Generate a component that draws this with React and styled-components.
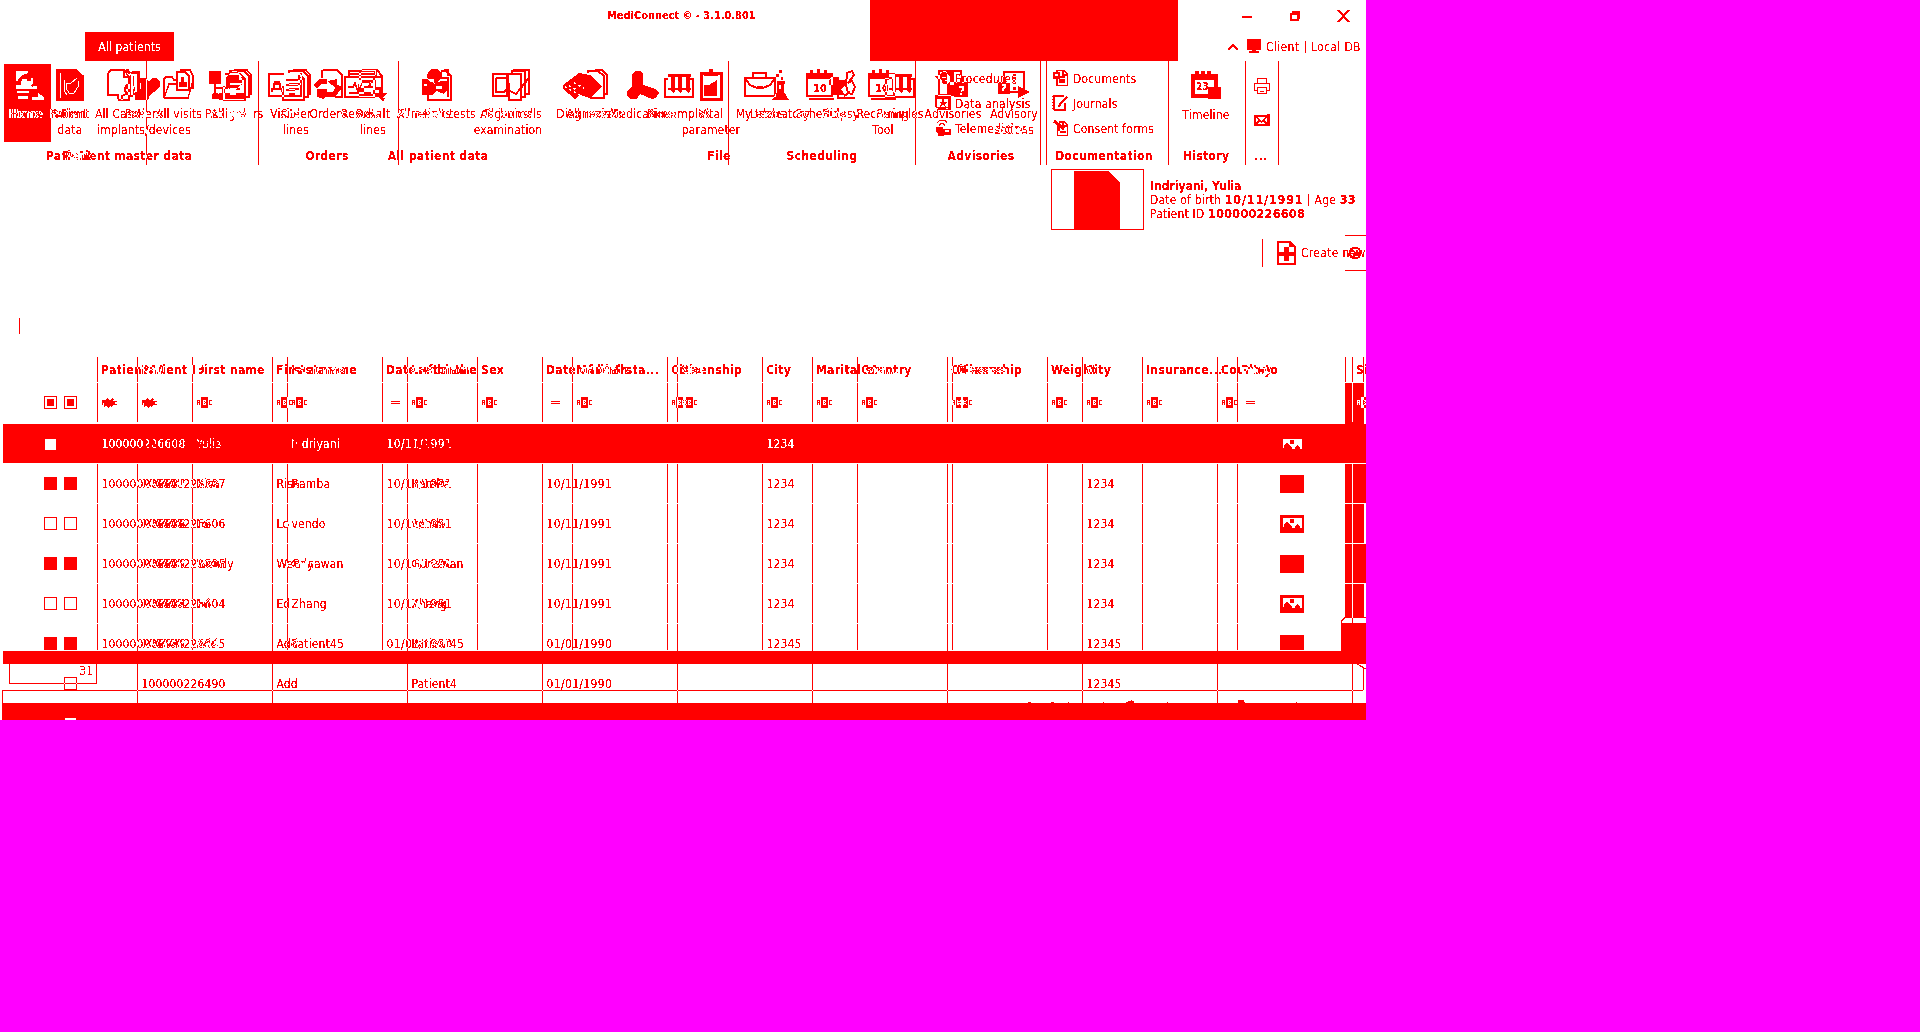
import React from 'react';
import styled, { createGlobalStyle, css } from 'styled-components';

const RED = '#ff0000';
const CYAN = '#00ffff';

const Global = createGlobalStyle`
  html, body { margin: 0; background: #ff00ff; overflow: hidden; }
  #root { height: 1032px; }
`;

const Frame = styled.main`
  width: 1366px;
  height: 720px;
  background: #fff;
  display: grid;
  grid-template: 720px / 1366px;
  overflow: hidden;
  isolation: isolate;
  font: 12px/16px 'DejaVu Sans Condensed', 'DejaVu Sans', sans-serif;
  font-stretch: condensed;
  white-space: pre;
  svg { display: block; flex: none; overflow: visible; shape-rendering: crispEdges; }
`;

const Layer = styled.div`
  --knockout: ${p => (p.$diff ? '#000' : '#fff')};
  grid-area: 1 / 1;
  min-width: 0;
  display: flex;
  flex-direction: column;
  overflow: hidden;
  color: ${p => (p.$diff ? CYAN : RED)};
  filter: url(#crisp);
  ${p => p.$diff && css`mix-blend-mode: difference;`}
`;

const Strip = styled.div`
  display: flex;
  flex: none;
  height: ${p => p.$h}px;
  padding-left: ${p => p.$left || 0}px;
  align-items: ${p => p.$align || 'center'};
`;
const Title = styled.b`
  width: 635px;
  font-size: 11px;
  letter-spacing: -0.03px;
`;
const WindowButtons = styled.div`
  display: flex;
  align-items: center;
  gap: 38px;
`;
const Tab = styled.div`
  background: ${RED};
  color: #fff;
  width: 89px;
  height: 29px;
  line-height: 30px;
  text-align: center;
  letter-spacing: 0.15px;
  margin-right: 1054px;
`;
const Connection = styled.div`
  display: flex;
  align-items: center;
  height: 29px;
  span { margin-left: 5px; line-height: 30px; letter-spacing: 0.35px; }
  svg + svg { margin-left: 9px; }
`;
const Banner = styled.div`
  position: absolute;
  left: 870px;
  top: 0;
  width: 308px;
  height: 61px;
  background: ${RED};
`;

const Ribbon = styled.div`
  display: grid;
  grid-template: 104px / 1366px;
  height: 104px;
  flex: none;
`;
const Lane = styled.div`
  grid-area: 1 / 1;
  display: flex;
  align-items: flex-start;
  padding-top: ${p => p.$top || 0}px;
`;
const Line = styled.i`
  width: 1px;
  height: ${p => p.$h || 104}px;
  flex: none;
  margin-left: ${p => p.$gap || 0}px;
  background: currentColor;
`;
const Slot = styled.div`
  width: 0;
  flex: none;
  margin-left: ${p => p.$gap}px;
  display: flex;
  flex-direction: column;
  align-items: center;
  text-align: center;
  font-weight: ${p => (p.$bold ? 'bold' : 'normal')};
  letter-spacing: ${p => (p.$bold ? '0.35px' : '0.15px')};
  svg + span { margin-top: 5px; }
`;
const HomeTile = styled.div`
  grid-area: 1 / 1;
  width: 47px;
  height: 78px;
  box-sizing: border-box;
  margin: 3px 0 0 4px;
  padding-top: 5px;
  background: ${RED};
  color: #fff;
  display: flex;
  flex-direction: column;
  align-items: center;
  svg + span { margin: 5px 6px 0 0; }
`;
const SmallList = styled.div`
  margin-left: ${p => p.$gap}px;
  width: ${p => p.$w}px;
  display: flex;
  flex-direction: column;
  gap: 9px;
`;
const SmallItem = styled.div`
  display: flex;
  gap: 4px;
  height: 16px;
  letter-spacing: 0.2px;
  span { line-height: 18px; }
`;
const SideTools = styled.div`
  display: flex;
  flex-direction: column;
  gap: 20px;
  padding-top: 8px;
`;

const Photo = styled.div`
  box-sizing: border-box;
  width: 93px;
  height: 61px;
  margin-top: 4px;
  padding-right: 1px;
  border: 1px solid;
  display: flex;
  justify-content: center;
  align-items: flex-end;
`;
const PatientInfo = styled.div`
  margin: 14px 0 0 6px;
  line-height: 14px;
  letter-spacing: 0.2px;
`;
const Name = styled.b`
  font-size: 12px;
  letter-spacing: 0;
`;
const Figure = styled.b`
  font-size: 12.5px;
  letter-spacing: ${p => p.$track || 0.25}px;
`;
const Create = styled.span`
  margin-left: 5px;
  line-height: 18px;
  width: 64px;
  flex: none;
  letter-spacing: 0.3px;
`;
const Expander = styled.div`
  box-sizing: border-box;
  flex: none;
  width: 21px;
  height: 36px;
  margin-left: -20px;
  padding: 10px 3px;
  border: solid;
  border-width: 1px 0;
`;

const Row = styled.div`
  display: flex;
  flex: none;
  height: ${p => p.$h || 39}px;
  margin-bottom: ${p => (p.$mb === undefined ? 1 : p.$mb)}px;
  ${p => p.$selected && css`
    margin-left: 3px;
    background: ${RED};
    color: #fff;
    width: 1363px;
    position: relative;
  `}
`;
const Lead = styled.div`
  box-sizing: border-box;
  width: ${p => p.$w}px;
  flex: none;
  padding: 13px 0 0 ${p => p.$pad}px;
`;
const Cell = styled.div`
  box-sizing: border-box;
  flex: none;
  width: ${p => p.$w}px;
  border-left: 1px solid ${p => (p.$plain ? 'transparent' : 'currentColor')};
  padding-left: ${p => (p.$bold ? 3 : 3.5)}px;
  display: flex;
  align-items: center;
  font-weight: ${p => (p.$bold ? 'bold' : 'normal')};
  letter-spacing: ${p => (p.$bold ? '0.35px' : p.$date ? '0.35px' : '0.13px')};
  min-width: 0;
`;
const Ghost = styled.div`
  position: absolute;
  left: 134px;
  top: 0;
  height: 39px;
  display: flex;
  color: ${RED};
`;
const Check = styled.div`
  box-sizing: border-box;
  width: ${p => (p.$kind === 'white' ? 11 : 13)}px;
  height: ${p => (p.$kind === 'white' ? 11 : 13)}px;
  margin: ${p => (p.$kind === 'white' ? '2px 0 0 1px' : 0)};
  border: 1px solid;
  ${p => (p.$kind === 'full' || p.$kind === 'white') && css`background: currentColor;`}
  ${p => p.$kind === 'mixed' && css`padding: 2px; background: currentColor content-box;`}
`;
const Picture = styled.div`
  width: 24px;
  height: 18px;
  margin-left: 38px;
  background: ${RED};
`;
const TableClip = styled.div`
  height: ${p => p.$h}px;
  flex: none;
  overflow: hidden;
  display: flex;
  flex-direction: column;
`;
const Bar = styled.div`
  flex: none;
  height: ${p => p.$h}px;
  margin: ${p => p.$m || 0};
  background: ${RED};
`;
const CountBox = styled.div`
  box-sizing: border-box;
  width: 88px;
  height: 20px;
  margin-left: 9px;
  padding-right: 3px;
  border: 1px solid;
  border-top: 0;
  text-align: right;
  line-height: 14px;
`;
const StatusEdge = styled.div`
  box-sizing: border-box;
  height: 13px;
  margin: 6px 3px 0 2px;
  border: 1px solid;
  border-width: 1px 0 0 1px;
`;
const ScrollTrack = styled.div`
  position: absolute;
  left: 1345px;
  top: 383px;
  display: flex;
  flex-direction: column;
  gap: 1px;
`;
const TrackPiece = styled.i`
  width: ${p => p.$w}px;
  height: ${p => p.$h}px;
  background: ${RED};
`;
const Corner = styled.div`
  position: absolute;
  left: 1341px;
  top: 617px;
`;
const CornerCover = styled.div`
  position: absolute;
  left: 1341px;
  top: 623px;
  width: 25px;
  height: 41px;
  background: ${RED};
`;
const Specks = styled.div`
  position: absolute;
  left: 1028px;
  top: 699px;
`;

const I = ({ w = 32, h = 32, children }) => (
  <svg width={w} height={h} viewBox={`0 0 ${w} ${h}`} fill="none" stroke="currentColor" strokeWidth="1.5">{children}</svg>
);
const F = { fill: 'currentColor', stroke: 'none' };
const K = 'var(--knockout)';

const icons = {
  home: <I><path {...F} d="M4 2H16V4L10 6L6 10V12H4zM10 10h5v2h4V9h2v6l-4 3H8zM4 16h5v2h12v2H4zM5 22h12v2H5zM6 27h10v3H6zM17 17h3v2h-3zM21 17h4v3h-4zM26 24l6 4v3H20v-3h6z" /></I>,
  patient: <I w={28}><path fill="currentColor" d="M1 1H20L27 7V31H1z" /><path stroke={K} strokeWidth="1" d="M4.500 4V29M8.500 11V22L11 26M22.500 12V17L18 24H13L10 19V14L15 14L21 9" /></I>,
  docs: <I w={28}><path strokeWidth="2" d="M2 4L5 1H18V8H23V31H12M2 4V26H12V30" /><path d="M18 1L23 8M18 1L26 6V26M20 1H22L27 8V20" /></I>,
  person: <I><path d="M2 31V27L8 24H13L17 27V31M5 18V22L8 25H11L14 21V18" strokeWidth="2" /><path {...F} d="M4 20L6 15H12L15 19L10 20zM16 24l3-4h7l3 5-3 5h-7z" /></I>,
  heart: <I><path {...F} d="M12 9h5l4 3 3-3h5l3 4v5l-6 5-5 4v3h-8V18z" /><path strokeWidth="3" d="M3 28V5L6 3H10V22M8 23V29H20" /></I>,
  folder: <I><path d="M1 29V10L3 8H9L11 11H14M1 29H25L30 12M1 29L6 15H13M14 3V21H26V7L22 3zM17 3L18 1H27L30 7V20" /><path {...F} d="M16 18V13H18V8H21V13H24V18z" /></I>,
  pedigree: <I w={40}><path {...F} d="M0 2h12v13H0zM17 9l6-7h5l5 6v6l-6 7h-6l-4-5zM3 25l3-2 4 2v5H3zM10 24h25v7H10z" /><path d="M6 15V24M7 19H18V9M14 19V29" /></I>,
  stack: <I w={30}><path strokeWidth="2" d="M3 5H18L23 10V31H2V17M18 5V10H23" /><path d="M8 5V2H22L27 7V28H24M13 2V1H25L29 6V25H27M8 15H20M8 20H18M8 25H14" /></I>,
  card: <I w={34}><path d="M1 5H33V27H1zM18 11H30M18 16H30M18 21H27" strokeWidth="2" /><path d="M6 19V15H12V19M4 23V20H14V23" strokeWidth="2" /><path {...F} d="M6 12h6v3H6z" /></I>,
  refresh: <I><path strokeWidth="5" d="M3 18L9 12H15M28 17L22 25H14L10 28" /><path {...F} d="M15 12L25 10V20zM5 20H15V22L12 30L5 28z" /><path d="M11 1H25L30 6V28H23M10 1V9" strokeWidth="2" /></I>,
  ecg: <I w={34}><path d="M1 8H30V28H1zM4 5H31V2H5V7M4 18H9L11 14L14 23L16 11L18 18H24L26 15V18H30M5 24H27" strokeWidth="1.5" /></I>,
  swap: <I w={28}><path strokeWidth="2" d="M3 1H18L23 7V27H1V3M17 1V8H23" /><path strokeWidth="3" d="M3 12H15V19H21V25M3 17V26H19L25 31" /><path {...F} d="M15 24h13l-6 7z" /></I>,
  search: <I w={30}><path {...F} fillRule="evenodd" d="M6 3l3-3h6l4 4v5l-5 5-6-1-3-5zM0 10h12v5l7-3h7v8l-4 5-7-3-5 4H0zM14 17v3h6v-3zM2 15h3v2H2z" /><path d="M6 23V31H29V7L24 2H19M19 3V9H26V28M22 1H26V7" strokeWidth="1.5" /></I>,
  technical: <I w={38}><path d="M1 5H15V27H1zM4 9H14M4 9V23H12L17 17M17 14V31H29V5H16V14M20 4V2H33V28H30M22 2V1H37V25H34M18 22L24 25L37 9" strokeWidth="2" /></I>,
  diagnosis: <I w={46}><path {...F} d="M1 16L17 4L28 6L40 18L28 29L18 26L13 30L1 20z" /><path stroke={K} strokeDasharray="2 3" d="M7 17L15 21M12 14L22 19M3 18L18 26" /><path d="M26 4V2H36L42 7V29H28M33 1H40L45 6V25H42" strokeWidth="2" /></I>,
  pill: <I><path {...F} d="M5 5l3-3h5l3 3v11l13 4 3 4-3 5-4 1-12-5-3 5H3l-3-3v-4l5-6z" /></I>,
  tubes: <I w={30}><path {...F} d="M4 5h8v3h-1v14l-2 2-2-2V8H4zM12 5h8v3h-2v14l-2 2-2-2V8h-2zM20 5h7v3h-1v14l-2 2-2-2V8h-2z" /><path d="M4 10H1V28H29V10H26M4 20H27" /></I>,
  clipboard: <I w={24}><path strokeWidth="3" d="M2 4H22V30H2z" /><path {...F} d="M5 3h5V0h4v3h5v4H5zM5 16h5l8-5v16H5z" /></I>,
  briefcase: <I><path strokeWidth="2" d="M1 9H31V27H1zM9 9V4H22V9M1 9L6 16L13 19H19L26 16L31 9" /><path {...F} d="M13 17h6v3h-6z" /></I>,
  flask: <I w={17}><path {...F} d="M5 12h8v3h-1v8l5 8H0l5-8v-8zM7 1h3v3H7zM4 5h3v3H4zM9 8h2v3H9z" /><path stroke={K} d="M8 16V20" /></I>,
  calendar: <I><path strokeWidth="2" d="M2 6H27V27H2zM4 30H29" /><path {...F} d="M1 4h4V1h3v3h4V0h3v4h4V1h3v3h6v6H1z" /><text x="8" y="23" fontSize="11" fontWeight="bold" {...F}>10</text></I>,
  scope: <I w={28}><path {...F} d="M4 8h8v3h7v5l-5 4 4 6H6V16H2v-4z" /><path strokeWidth="2" d="M11 19V29H28M20 4L25 2L27 6L21 14L25 12L28 18L25 25L21 24L19 16zM17 27L23 23" /></I>,
  advisory: <I w={30}><path strokeWidth="2" d="M1 2H23V26H1z" /><path strokeWidth="1" d="M9.500 3V25" /><path {...F} d="M10 3h6v10h-4v3h4v9h-6zM16 13h14v15H16z" /><path stroke={K} strokeWidth="2" d="M21 18H25V21L23 22M23 24V26" /></I>,
  advisoryAction: <I><path d="M6 3H26V23H6z" /><path {...F} d="M0 13h12v12H0zM15 5h3v10h-3zM15 18h3v3h-3zM20 17l12 6-12 6z" /><path stroke="#fff" strokeWidth="2" d="M4 16H7V18L5 20V22" /></I>,
  timeline: <I><path strokeWidth="4" d="M3 6H26V26H3z" /><path {...F} d="M1 4h4V1h4v3h2V1h4v3h2V1h4v3h6v6H1zM18 17h13v12H18z" /><text x="6" y="20" fontSize="10" fontWeight="bold" {...F}>23</text></I>,
  proc: <I w={16} h={16}><path {...F} d="M0 6l5-1 2-3h3l5 5v4l-3 3H8L6 9H3L1 8zM8 1h3v1H8z" /><path stroke={K} strokeWidth="1" d="M7 7.500h4M10 10.500h2" /></I>,
  analysis: <I w={16} h={16}><path {...F} fillRule="evenodd" d="M0 0h16v15H3L0 12zM2 4v8h11V4z" /><path {...F} d="M7 4h2v3h3l-2 2 1 3-3-2-3 2 1-3-2-2h3z" /></I>,
  tele: <I w={16} h={16}><path strokeWidth="1" d="M2 2.500L5 .5H10L12 2.500M4 5.500L6 3.500H8L10 5.500" /><path {...F} fillRule="evenodd" d="M1 7h7v2h8v6H9v1H3v-2L1 12zM10 10v2h4v-2z" /></I>,
  docSmall: <I w={16} h={16}><path {...F} d="M0 2h7v7H0z" /><path d="M4 9V15.500H14.500V4L11 .5H4V3M10 1V5H14M7 7H12M6 10H12M6 12H12" /><path stroke="#fff" d="M2 5h3" /></I>,
  journal: <I w={16} h={16}><path d="M1 15V1H11M12 8V15H1" /><path strokeDasharray="1 2" d="M0 1V15" /><path strokeWidth="2" d="M14 2L7 9L6 12" /></I>,
  consent: <I w={16} h={16}><path d="M4.500 8V15.500H14.500V5L11 2H6M10 2V6H14M7 12H13" /><path strokeWidth="3" d="M1 1L11 9M5 6V11" /></I>,
  print: <I w={16} h={16}><path strokeWidth="1" d="M3.500 6V.5H12.500V6M3 12.500H.5V5.500H15.500V12.500H13M3.500 9.500H12.500V15.500H3.500zM6 13.500H10" /></I>,
  mail: <I w={17} h={12}><path strokeWidth="2" d="M1 2H14V11H1z" /><path strokeWidth="1.5" d="M2 3L7.500 8L13 3M2 10L6 6M13 10L9 6" /><path {...F} d="M13 0h3v12h-3z" /></I>,
};

const Abc = ({ first }) => (
  <svg width="16" height="13" viewBox="0 0 16 13" fill="currentColor">
    {first
      ? <path d="M0 4h3v1l2-3 2 2 3-1v-1l2 1-1 2h4v1h-2v2h2v1h-4l-1 2-2-1-2 2-2-2-2 1V7H1v2H0z" />
      : <><path fillRule="evenodd" d="M0 4h3v5H2V7H1v2H0zM1 5v1h1V5z" /><path d="M12 4h3v1h-2v3h2v1h-3z" /><path fillRule="evenodd" d="M4 1h7v11H4zM6 4v5h3V7H8V6h1V4zM7 5h1v1H7zM7 7h1v1H7z" /></>}
  </svg>
);
const Equals = () => (
  <svg width="14" height="6" viewBox="0 0 14 6" fill="currentColor"><path d="M4 1h9v1H4zM4 3h9v1H4z" /></svg>
);

const Slots = ({ items, top, bold }) => (
  <Lane $top={top}>
    {items.map(([c, icon, text], i) => (
      <Slot key={i} $bold={bold} $gap={c - (i ? items[i - 1][0] : 0)}>
        {icon && icons[icon]}
        <span>{text}</span>
      </Slot>
    ))}
  </Lane>
);

const ribbonA = [
  [70, 'patient', 'Patient\ndata'], [120, 'docs', 'All Cases'], [179, 'folder', 'All visits'],
  [237, 'stack', 'All orders'], [296, 'stack', 'Order\nlines'], [328, 'refresh', 'Orders'],
  [373, 'swap', 'Result\nlines'], [437, 'search', 'Function tests'],
  [511, 'technical', 'All journals'], [585, 'diagnosis', 'Diagnoses'], [643, 'pill', 'Medications'],
  [711, 'clipboard', 'Vital\nparameter'], [760, 'briefcase', 'My tasks'], [821, 'calendar', 'Schedule'],
  [883, 'calendar', 'Recurring\nTool'], [953, 'advisory', 'Advisories'], [1014, 'advisoryAction', 'Advisory\nactions'],
];
const ribbonIconsB = [
  [136, 'person', ''], [144, 'heart', ''], [229, 'pedigree', 'Pedigree'], [285, 'card', 'Visits'], [361, 'ecg', 'Results'],
  [679, 'tubes', 'Biosamples'], [780, 'flask', 'Laboratory'], [841, 'scope', 'Biopsy'], [900, 'tubes', 'Samples'],
];
const ribbonLabelsB = [
  [27, null, 'Home'], [68, null, 'Patient'], [144, null, 'Patient\nimplants/devices'],
  [424, null, 'All results'], [508, null, 'Technical\nexamination'], [595, null, 'All revisits'],
];

const aHeads = ['Patient ID', 'First name', 'Last name', 'Date of birth', 'Sex', 'Marital sta...', 'Citizenship', 'City', 'Country', 'Disease', 'Weight', 'Insurance...', 'Photo'];
const bHeads = ['Patient ID', 'First name', 'Last name', 'Date of birth', 'Sex', 'Marital sta...', 'Citizenship', 'City', 'Country', 'Size'];
const people = [
  ['100000226608', 'Yulia', 'Indriyani', '10/11/1991', '1234'],
  ['100000226607', 'Risa', 'Bamba', '10/11/1991', '1234'],
  ['100000226606', 'Lo', 'vendo', '10/11/1991', '1234'],
  ['100000226605', 'Wendy', 'Gunawan', '10/11/1991', '1234'],
  ['100000226604', 'Ed', 'Zhang', '10/11/1991', '1234'],
  ['100000226545', 'Add', 'Patient45', '01/01/1990', '12345'],
  ['100000226490', 'Add', 'Patient4', '01/01/1990', '12345'],
];
const spread = (p, n) => Array.from({ length: n }, (_, i) => (i < 4 ? p[i] : i === 7 ? p[4] : ''));
const landscape = 'M0 0h19v10h-2V8l-3-2-2 2v2H9V8L6 6V5L3 4 1 6v3H0zM7 1v4h4V1z';

const Grid = ({ heads, w, lead, pad, count, diff, last }) => {
  const widthOf = i => (i === heads.length - 1 ? last : w);
  return (
    <>
      <Row $h={25}>
        <Lead $w={lead} />
        {heads.map((h, i) => <Cell key={i} $w={widthOf(i)} $bold>{h}</Cell>)}
        {!diff && <><Line $h={25} /><Line $h={25} $gap={17} /></>}
      </Row>
      <Row $mb={2}>
        <Lead $w={lead} $pad={pad}><Check $kind="mixed" /></Lead>
        {heads.map((h, i) => (
          <Cell key={i} $w={widthOf(i)}>{i === 3 || h === 'Photo' ? <Equals /> : <Abc first={i === 0} />}</Cell>
        ))}
      </Row>
      {people.slice(0, count).map((p, r) => {
        const selected = r === 0;
        if (diff && selected) return <Row key={r} />;
        return (
          <Row key={r} $selected={selected}>
            <Lead $w={selected ? lead - 3 : lead} $pad={selected ? pad - 3 : pad}>
              <Check $kind={selected ? 'white' : r % 2 ? 'full' : 'empty'} />
            </Lead>
            {spread(p, heads.length).map((v, i) => (
              <Cell key={i} $w={widthOf(i)} $plain={selected} $date={i === 3}>
                {heads[i] !== 'Photo' ? v : selected
                  ? <svg width="62" height="10" viewBox="-41 0 62 10" fill="currentColor"><path fillRule="evenodd" d={landscape} /></svg>
                  : <Picture>{r % 2 === 0 && <svg width="24" height="18" viewBox="-3 -3 24 18" fill="#fff"><path fillRule="evenodd" d={landscape} /></svg>}</Picture>}
              </Cell>
            ))}
            {selected && <Ghost>{p.slice(0, 3).map(v => <Cell key={v} $w={135} $plain>{v}</Cell>)}</Ghost>}
          </Row>
        );
      })}
    </>
  );
};

const groupTitles = [
  [69, null, 'Patient'], [327, null, 'Orders'], [438, null, 'All patient data'], [719, null, 'File'],
  [822, null, 'Scheduling'], [981, null, 'Advisories'], [1104, null, 'Documentation'], [1206, null, 'History'], [1261, null, '...'],
];

export default function App() {
  return (
    <>
      <Global />
      <Frame>
        <svg width="0" height="0" style={{ position: 'absolute' }}>
          <filter id="crisp" x="0" y="0" width="100%" height="100%" colorInterpolationFilters="sRGB">
            <feComponentTransfer>
              <feFuncR type="discrete" tableValues="0 1" />
              <feFuncG type="discrete" tableValues="0 0 0 1 1 1 1" />
              <feFuncB type="discrete" tableValues="0 0 0 1 1 1 1" />
              <feFuncA type="discrete" tableValues="0 0 0 1 1 1 1" />
            </feComponentTransfer>
          </filter>
        </svg>

        <Layer>
          <Strip $h={32} $left={607}>
            <Title>MediConnect © - 3.1.0.801</Title>
            <WindowButtons>
              <I w={10} h={12}><path strokeWidth="2" d="M0 7H10" /></I>
              <I w={10} h={10}><path {...F} fillRule="evenodd" d="M0 2h2V0h8v8h-1v2H0zM2 4v4h5V4z" /></I>
              <I w={12} h={12}><path strokeWidth="2" d="M0 0L11 12M11 0L0 12" /></I>
            </WindowButtons>
          </Strip>
          <Strip $h={29} $left={85}>
            <Tab>All patients</Tab>
            <Connection>
              <I w={10} h={6}><path strokeWidth="2.5" d="M0 6L5 1L10 6" /></I>
              <I w={14} h={15}><path {...F} d="M0 0h14v11H9v1h3v2H2v-2h3v-1H0z" /></I>
              <span>Client | Local DB</span>
            </Connection>
          </Strip>
          <Banner />

          <Ribbon>
            <Lane>
              {[146, 111, 139, 329, 186, 124, 5, 121, 76, 32].map((g, i) => <Line key={i} $gap={g} />)}
            </Lane>
            <HomeTile>{icons.home}<span>Home</span></HomeTile>
            <Slots items={ribbonA} top={8} />
            <Slots top={87} bold items={groupTitles} />
            <Lane $top={9}>
              <SmallList $gap={1053} $w={153}>
                <SmallItem>{icons.docSmall}<span>Documents</span></SmallItem>
                <SmallItem>{icons.journal}<span>Journals</span></SmallItem>
                <SmallItem>{icons.consent}<span>Consent forms</span></SmallItem>
              </SmallList>
              <Slot $gap={0}>{icons.timeline}<span>Timeline</span></Slot>
              <SmallList $gap={48} $w={20}>
                <SideTools>{icons.print}{icons.mail}</SideTools>
              </SmallList>
            </Lane>
          </Ribbon>

          <Strip $h={67} $left={1051} $align="flex-start">
            <Photo><I w={46} h={58}><path {...F} d="M0 0H34L46 12V58H0z" /></I></Photo>
            <PatientInfo>
              <Name>Indriyani, Yulia</Name>{'\n'}
              Date of birth <Figure $track={0.8}>10/11/1991</Figure> | Age <Figure>33</Figure>{'\n'}
              Patient ID <Figure>100000226608</Figure>
            </PatientInfo>
          </Strip>
          <Strip $h={42} $left={1262}>
            <Line $h={28} />
            <Strip $h={24} $left={14}>
              <I w={19} h={24}><path strokeWidth="2" d="M1 1H13L18 6V23H1z" /><path {...F} d="M7 6h5v5h6v4h-6v5H7v-5H1v-4h6zM12 1l6 5h-6z" /></I>
            </Strip>
            <Create>Create new</Create>
            <Expander><I w={14} h={14}><circle cx="7" cy="7" r="5.500" strokeWidth="2" /><path strokeWidth="2" d="M4 4L9 8M9 4V9H5" /></I></Expander>
          </Strip>
          <Strip $h={83} $left={19} $align="flex-start">
            <Lane $top={44}><Line $h={16} /></Lane>
          </Strip>

          <TableClip $h={293}>
            <Grid heads={aHeads} w={95} last={108} lead={97} pad={44} count={6} />
          </TableClip>
          <Bar $h={13} $m="1px 0 0 3px" />
          <CountBox>31</CountBox>
          <StatusEdge />
          <Bar $h={17} $m="0 0 0 2px" />
          <ScrollTrack>
            <TrackPiece $w={19} $h={80} />
            {[21, 19, 21, 19].map((w, i) => <TrackPiece key={i} $w={w} $h={i === 3 ? 33 : 39} />)}
          </ScrollTrack>
          <Corner>
            <I w={25} h={74}><path strokeWidth="1" d="M25 .5H4L.5 4V8M16 47L25 52M22.500 51V73" /></I>
          </Corner>
          <Specks>
            <I w={272} h={4}><path {...F} d="M0 3h3v1H0zM23 3h3v1h-3zM40 3h1v1h-1zM75 3h1v1h-1zM98 3h2v-1h3v-1h1v1h2v2h-8zM139 3h1v1h-1zM210 1h6v2h1v1h-7zM268 3h1v1h-1z" /></I>
          </Specks>
        </Layer>

        <Layer $diff>
          <Strip $h={61} />
          <Ribbon>
            <Slots items={ribbonIconsB} top={8} />
            <Slots items={ribbonLabelsB} top={45} />
            <Slots items={[[128, null, 'Patient master data']]} top={87} bold />
            <Lane $top={9}>
              <SmallList $gap={935} $w={110}>
                <SmallItem>{icons.proc}<span>Procedures</span></SmallItem>
                <SmallItem>{icons.analysis}<span>Data analysis</span></SmallItem>
                <SmallItem>{icons.tele}<span>Telemedicine</span></SmallItem>
              </SmallList>
            </Lane>
          </Ribbon>
          <Strip $h={192} />
          <TableClip $h={294}>
            <Grid heads={bHeads} w={135} last={135} lead={137} pad={64} count={6} diff />
          </TableClip>
          <Strip $h={13} />
          <Row $mb={0}>
            <Lead $w={137} $pad={64}><Check $kind="empty" /></Lead>
            {spread(people[6], 10).map((v, i) => <Cell key={i} $w={135} $date={i === 3}>{v}</Cell>)}
          </Row>
          <Strip $h={17} $left={65} $align="flex-end">
            <I w={11} h={2}><path {...F} d="M0 0h11v2H0z" /></I>
          </Strip>
        </Layer>
        <CornerCover />
      </Frame>
    </>
  );
}
